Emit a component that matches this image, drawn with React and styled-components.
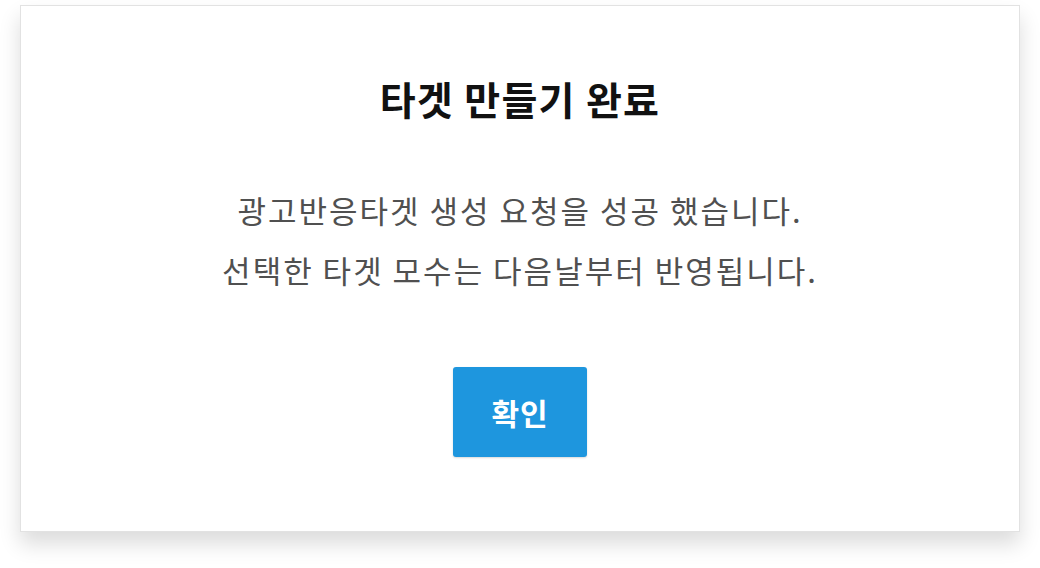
import React from 'react';
import styled, { createGlobalStyle } from 'styled-components';

const GlobalStyle = createGlobalStyle`
  html, body {
    margin: 0;
    padding: 0;
    background: #fff;
  }
  body {
    font-family: 'Noto Sans CJK KR', 'Noto Sans', sans-serif;
  }
`;

const Page = styled.div`
  width: 1040px;
  height: 568px;
  padding: 5px 20px 0;
  box-sizing: border-box;
`;

const Card = styled.div`
  width: 1000px;
  height: 527px;
  box-sizing: border-box;
  border: 1px solid #e2e2e2;
  background: #fff;
  box-shadow: 0 12px 20px rgba(0, 0, 0, 0.14);
  display: flex;
  flex-direction: column;
  align-items: center;
  padding-top: 68px;
`;

const Title = styled.h2`
  margin: 0;
  font-size: 39px;
  line-height: 48px;
  font-weight: 700;
  color: #111;
  letter-spacing: 1.3px;
`;

const Message = styled.div`
  margin-top: 58px;
  text-align: center;
  font-size: 31px;
  line-height: 60px;
  color: #505050;
  letter-spacing: 2px;
`;

const ConfirmButton = styled.button`
  margin-top: 67px;
  width: 134px;
  height: 90px;
  border: none;
  border-radius: 3px;
  background: #1e96de;
  color: #fff;
  font-family: inherit;
  font-size: 30px;
  font-weight: 700;
  letter-spacing: 1px;
  box-shadow: 0 1px 2px rgba(0, 0, 0, 0.15);
  cursor: pointer;
`;

export default function App() {
  return (
    <>
      <GlobalStyle />
      <Page>
        <Card>
          <Title>타겟 만들기 완료</Title>
          <Message>
            광고반응타겟 생성 요청을 성공 했습니다.
            <br />
            선택한 타겟 모수는 다음날부터 반영됩니다.
          </Message>
          <ConfirmButton>확인</ConfirmButton>
        </Card>
      </Page>
    </>
  );
}
